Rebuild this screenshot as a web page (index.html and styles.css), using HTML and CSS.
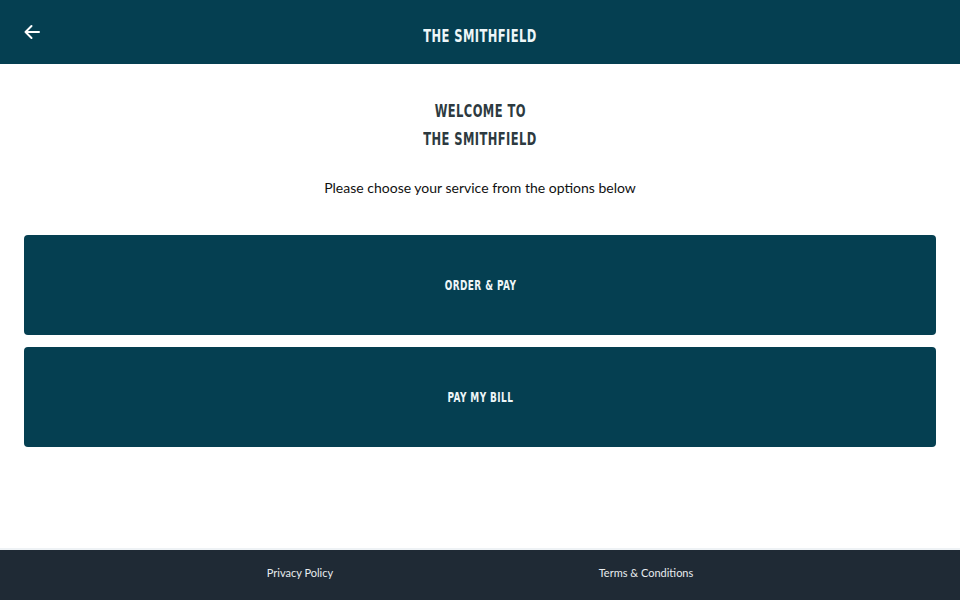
FILE: index.html
```html
<!DOCTYPE html>
<html>
<head>
<meta charset="utf-8">
<link rel="stylesheet" href="styles.css">
</head>
<body>
<div class="page">
  <header class="topbar">
    <button class="back" aria-label="Back">
      <svg width="18" height="18" viewBox="0 0 18 18" fill="none" stroke="#fff" stroke-width="2" stroke-linecap="round" stroke-linejoin="round"><path d="M16 9H2.5M8.5 3L2.5 9l6 6"/></svg>
    </button>
    <div class="brand"><span class="narrow">THE SMITHFIELD</span></div>
  </header>
  <main class="content">
    <h1 class="welcome"><span class="narrow">WELCOME TO</span><br><span class="narrow">THE SMITHFIELD</span></h1>
    <p class="lead">Please choose your service from the options below</p>
    <div class="options">
      <a class="option"><span class="narrow">ORDER &amp; PAY</span></a>
      <a class="option"><span class="narrow">PAY MY BILL</span></a>
    </div>
  </main>
  <footer class="footer">
    <div class="links">
      <a class="link">Privacy Policy</a>
      <a class="link">Terms &amp; Conditions</a>
    </div>
  </footer>
</div>
</body>
</html>
```

FILE: styles.css
```css
* { box-sizing: border-box; }
html, body { margin: 0; padding: 0; }
body { background: #fff; font-family: "Lato", "Liberation Sans", sans-serif; }
.page { height: 600px; display: flex; flex-direction: column; }
.topbar {
  height: 64px; background: #053f51; display: flex; align-items: center; justify-content: center; position: relative;
}
.back {
  position: absolute; left: 23px; top: 23px; width: 18px; height: 18px; padding: 0; border: 0; background: none; display: flex;
}
.brand, .welcome, .option {
  font-family: "DejaVu Sans Condensed", "DejaVu Sans", sans-serif;
  font-weight: bold;
  letter-spacing: 0.6px;
}
.narrow { display: inline-block; transform: scaleX(0.71); white-space: nowrap; }
.brand { color: #eef6f8; font-size: 18px; padding-top: 6px; }
.content { flex: 1; display: flex; flex-direction: column; align-items: center; padding: 33px 24px 0; }
.welcome { margin: 0; font-size: 18px; line-height: 28px; color: #2d3a40; text-align: center; }
.lead { margin: 25px 0 0; font-size: 14px; line-height: 20px; color: #111; }
.options { align-self: stretch; display: flex; flex-direction: column; gap: 12px; margin-top: 37px; }
.option {
  height: 100px; background: #053f51; border-radius: 4px; display: flex; align-items: center; justify-content: center;
  color: #eef6f8; font-size: 14px;
}
.footer { height: 52px; border-top: 2px solid #eef2f5; background: #1f2a35; display: flex; align-items: center; justify-content: center; padding-bottom: 5px; }
.links { display: flex; padding-right: 14px; }
.link { width: 346px; text-align: center; color: #e8ecef; font-size: 11px; }
```
